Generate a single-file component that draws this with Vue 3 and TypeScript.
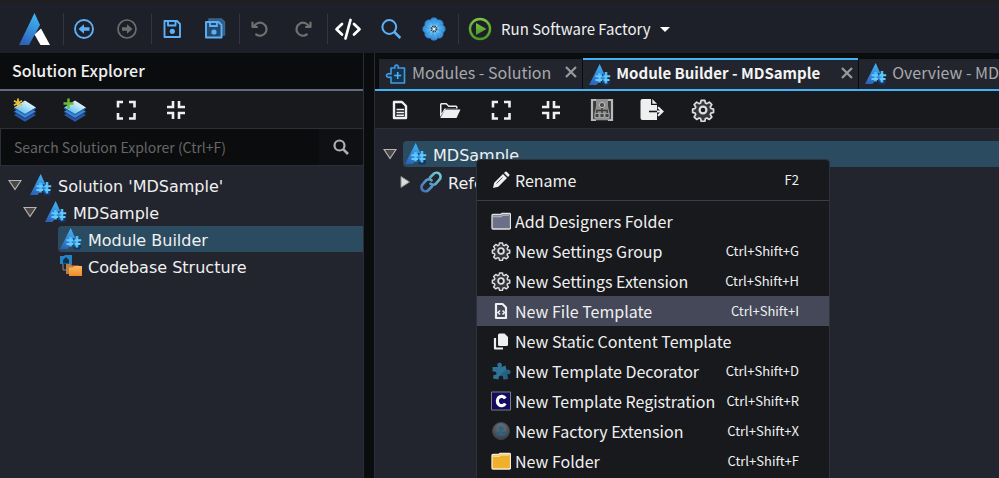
<script setup lang="ts">
interface Tool {
  icon: string
  label: string
}

interface Tab {
  icon: string
  title: string
  active?: boolean
}

interface TreeNode {
  icon: string
  title: string
  level: number
  state: 'open' | 'closed' | 'leaf'
  selected?: boolean
}

interface MenuEntry {
  icon: string
  title: string
  shortcut?: string
  highlighted?: boolean
}

const mainTools: Tool[][] = [
  [{ icon: 'back', label: 'Back' }, { icon: 'forward', label: 'Forward' }],
  [{ icon: 'save', label: 'Save' }, { icon: 'save-all', label: 'Save all' }],
  [{ icon: 'undo', label: 'Undo' }, { icon: 'redo', label: 'Redo' }],
  [
    { icon: 'code', label: 'Code' },
    { icon: 'search', label: 'Search' },
    { icon: 'flower', label: 'Modules' },
  ],
]

const explorerTools: Tool[][] = [
  [{ icon: 'layers-new', label: 'New application' }, { icon: 'layers-add', label: 'Add application' }],
  [{ icon: 'expand', label: 'Expand all' }, { icon: 'collapse', label: 'Collapse all' }],
]

const designerTools: Tool[][] = [
  [{ icon: 'document', label: 'New' }, { icon: 'folder-open', label: 'Open' }],
  [{ icon: 'expand', label: 'Expand all' }, { icon: 'collapse', label: 'Collapse all' }],
  [{ icon: 'hierarchy', label: 'Metadata' }, { icon: 'export', label: 'Export' }],
  [{ icon: 'gear', label: 'Settings' }],
]

const tabs: Tab[] = [
  { icon: 'module', title: 'Modules - Solution' },
  { icon: 'designer', title: 'Module Builder - MDSample', active: true },
  { icon: 'designer', title: 'Overview - MDSample' },
]

const solutionTree: TreeNode[] = [
  { icon: 'designer', title: "Solution 'MDSample'", level: 0, state: 'open' },
  { icon: 'designer', title: 'MDSample', level: 1, state: 'open' },
  { icon: 'designer', title: 'Module Builder', level: 2, state: 'leaf', selected: true },
  { icon: 'codebase', title: 'Codebase Structure', level: 2, state: 'leaf' },
]

const designerTree: TreeNode[] = [
  { icon: 'designer', title: 'MDSample', level: 0, state: 'open', selected: true },
  { icon: 'link', title: 'References', level: 1, state: 'closed' },
]

const menuGroups: MenuEntry[][] = [
  [{ icon: 'pencil', title: 'Rename', shortcut: 'F2' }],
  [
    { icon: 'folder-grey', title: 'Add Designers Folder' },
    { icon: 'gear', title: 'New Settings Group', shortcut: 'Ctrl+Shift+G' },
    { icon: 'gear', title: 'New Settings Extension', shortcut: 'Ctrl+Shift+H' },
    { icon: 'file-code', title: 'New File Template', shortcut: 'Ctrl+Shift+I', highlighted: true },
    { icon: 'copy', title: 'New Static Content Template' },
    { icon: 'puzzle', title: 'New Template Decorator', shortcut: 'Ctrl+Shift+D' },
    { icon: 'registration', title: 'New Template Registration', shortcut: 'Ctrl+Shift+R' },
    { icon: 'factory', title: 'New Factory Extension', shortcut: 'Ctrl+Shift+X' },
    { icon: 'folder-yellow', title: 'New Folder', shortcut: 'Ctrl+Shift+F' },
  ],
]
</script>

<template>
  <svg class="sprite" aria-hidden="true">
    <defs>
      <linearGradient id="blueFade" x1="0.6" y1="0" x2="0.3" y2="1">
        <stop offset="0" stop-color="#41b4f5" />
        <stop offset="1" stop-color="#2c62b8" />
      </linearGradient>
      <linearGradient id="iceFade" x1="1" y1="0" x2="0" y2="1">
        <stop offset="0.1" stop-color="#ffffff" />
        <stop offset="0.8" stop-color="#63c1ee" />
      </linearGradient>
      <linearGradient id="linkFade" gradientUnits="userSpaceOnUse" x1="20" y1="0" x2="0" y2="20">
        <stop offset="0.1" stop-color="#6ccbd3" />
        <stop offset="0.9" stop-color="#4a76c0" />
      </linearGradient>
      <linearGradient id="greenFade" x1="0" y1="0" x2="0" y2="1">
        <stop offset="0" stop-color="#7cc043" />
        <stop offset="1" stop-color="#4b9a24" />
      </linearGradient>
      <linearGradient id="orangeFade" x1="0" y1="0" x2="0" y2="1">
        <stop offset="0" stop-color="#ffb95c" />
        <stop offset="1" stop-color="#ee8a2a" />
      </linearGradient>
      <radialGradient id="steelFade" cx="0.5" cy="0.3" r="0.7">
        <stop offset="0" stop-color="#727883" />
        <stop offset="1" stop-color="#363b43" />
      </radialGradient>
      <radialGradient id="petalFade" gradientUnits="userSpaceOnUse" cx="12" cy="12" r="12">
        <stop offset="0.1" stop-color="#c9ecff" />
        <stop offset="0.45" stop-color="#52b2ee" />
        <stop offset="1" stop-color="#2c83d4" />
      </radialGradient>
    </defs>

    <symbol id="logo" viewBox="0 0 32 32">
      <path d="M15.5 0L21 12 10 32H0z" fill="url(#blueFade)" />
      <path d="M22 15.5l-6.500 6L21.500 32H31z" fill="#fff" />
    </symbol>

    <symbol id="back" viewBox="0 0 24 24">
      <circle cx="12" cy="12" r="9" fill="none" stroke="#5cb0f8" stroke-width="1.900" />
      <path d="M6.500 12l5.500-4.800v3h5.500v3.600H12v3z" fill="#5cb0f8" />
    </symbol>
    <symbol id="forward" viewBox="0 0 24 24">
      <circle cx="12" cy="12" r="9" fill="none" stroke="#6e6e6e" stroke-width="1.700" />
      <path d="M17.500 12L12 7.200v3H7v3.600h5v3z" fill="#6e6e6e" />
    </symbol>
    <symbol id="save" viewBox="0 0 24 24">
      <path d="M4.500 4h12.500l3 3v13h-15.500zM8 4v4.500h7.500V4" fill="none" stroke="#5cb0f8" stroke-width="1.900" stroke-linejoin="round" />
      <circle cx="12.300" cy="14.300" r="2.600" fill="#5cb0f8" />
    </symbol>
    <symbol id="save-all" viewBox="0 0 24 24">
      <path d="M6 2h12.500l3 3v13H6z" fill="#315d86" stroke="#3a668e" stroke-width="1.500" stroke-linejoin="round" />
      <path d="M3 5h12.500l3 3V20.500H3z" fill="#26486a" stroke="#5cb0f8" stroke-width="1.900" stroke-linejoin="round" />
      <path d="M7 5v4h7V5" fill="none" stroke="#5cb0f8" stroke-width="1.800" />
      <circle cx="11" cy="15" r="2.600" fill="#5cb0f8" />
    </symbol>
    <symbol id="undo" viewBox="0 0 24 24">
      <path d="M4.500 5.500v4.500h4.500M6.200 9.300a6.500 6.500 0 1 1 2 8.200" fill="none" stroke="#707070" stroke-width="2.200" stroke-linecap="round" stroke-linejoin="round" />
    </symbol>
    <symbol id="redo" viewBox="0 0 24 24">
      <path d="M19.500 5.500v4.500h-4.500M17.800 9.300a6.500 6.500 0 1 0-2 8.200" fill="none" stroke="#707070" stroke-width="2.200" stroke-linecap="round" stroke-linejoin="round" />
    </symbol>
    <symbol id="code" viewBox="0 0 28 24">
      <path d="M8 7L2.500 12.300 8 17.500M20 7l5.500 5.300L20 17.500M16.500 3L11.500 21.500" fill="none" stroke="#fff" stroke-width="2.700" stroke-linecap="round" stroke-linejoin="round" />
    </symbol>
    <symbol id="search" viewBox="0 0 24 24">
      <circle cx="10.300" cy="10" r="6.900" fill="none" stroke="#5cb0f8" stroke-width="2" />
      <path d="M15.300 15l6 6" stroke="#5cb0f8" stroke-width="2.500" />
    </symbol>
    <symbol id="flower" viewBox="0 0 24 24">
      <g fill="url(#petalFade)" stroke="#2377c4" stroke-width="0.400">
        <circle cx="12" cy="4.800" r="4.200" />
        <circle cx="17.100" cy="6.900" r="4.200" />
        <circle cx="19.200" cy="12" r="4.200" />
        <circle cx="17.100" cy="17.100" r="4.200" />
        <circle cx="12" cy="19.200" r="4.200" />
        <circle cx="6.900" cy="17.100" r="4.200" />
        <circle cx="4.800" cy="12" r="4.200" />
        <circle cx="6.900" cy="6.900" r="4.200" />
      </g>
      <circle cx="12" cy="12" r="3.600" fill="#c4e6fa" />
      <circle cx="12" cy="12" r="2.500" fill="none" stroke="#17384f" stroke-width="2" stroke-dasharray="1.300 .660" />
      <circle cx="12" cy="12" r="1.100" fill="#f2fbff" />
    </symbol>
    <symbol id="run" viewBox="0 0 24 24">
      <circle cx="12" cy="12" r="10" fill="none" stroke="url(#greenFade)" stroke-width="2.400" />
      <path d="M8 6l10.500 6L8 18z" fill="url(#greenFade)" />
    </symbol>

    <symbol id="layers" viewBox="0 0 24 24">
      <path d="M1 17l11-6 11 6-11 6.800z" fill="#2857a4" />
      <path d="M1 13.500l11-6 11 6-11 6.500z" fill="#3f86d3" />
      <path d="M1 13.500v1l11 6.500 11-6.500v-1L12 20z" fill="#1b4184" />
      <path d="M1 9.500L12 2.500l11 7-11 6.500z" fill="url(#iceFade)" />
      <path d="M1 9.500v1.300l11 6.500 11-6.500V9.500L12 16z" fill="#2466ae" />
    </symbol>
    <symbol id="layers-new" viewBox="0 0 24 24">
      <use href="#layers" width="24" height="24" />
      <path d="M5 .5v9M1 2.700l8 4.600M9 2.700L1 7.300" stroke="#e8c33a" stroke-width="1.800" />
    </symbol>
    <symbol id="layers-add" viewBox="0 0 24 24">
      <use href="#layers" width="24" height="24" />
      <path d="M5.500 .5v10M.5 5.500h10" stroke="#6dbb2f" stroke-width="2.400" />
    </symbol>
    <symbol id="expand" viewBox="0 0 24 24">
      <path d="M4 9.500V4h5M15 4h5.500v5.500M20.500 15v5.500H15M9 20.500H4V15" fill="none" stroke="#efefef" stroke-width="2.600" />
    </symbol>
    <symbol id="collapse" viewBox="0 0 24 24">
      <path d="M9 3v6H3M15 3v6h6M9 21v-6H3M15 21v-6h6" fill="none" stroke="#efefef" stroke-width="2.600" />
    </symbol>
    <symbol id="magnifier" viewBox="0 0 18 18">
      <circle cx="7.500" cy="7.500" r="5" fill="none" stroke="#b0b0b0" stroke-width="2.200" />
      <path d="M11.300 11.300L16 16" stroke="#b0b0b0" stroke-width="2.600" />
    </symbol>

    <symbol id="document" viewBox="0 0 24 24">
      <path d="M6 4h8l4 4v12H6z" fill="none" stroke="#efefef" stroke-width="2.400" stroke-linejoin="round" />
      <path d="M8.500 11.500h7.500M8.500 14.500h7.500M8.500 17.300h7.500" stroke="#efefef" stroke-width="1.400" />
    </symbol>
    <symbol id="folder-open" viewBox="0 0 24 24">
      <path d="M2 19V6.500q0-1.500 1.500-1.500h5l2.500 2.500h7q1.500 0 1.500 1.500v1.500H8z" fill="#efefef" />
      <path d="M3.500 15.500V6.500h4.500L10.500 9H18v1.500H6.500z" fill="#17191d" />
      <path d="M7 11.500h15.500L18.500 20H2.300z" fill="#efefef" />
    </symbol>
    <symbol id="hierarchy" viewBox="0 0 24 24">
      <path d="M1 1h22v22H1z" fill="#3a3a3a" />
      <path d="M6 2H2v20h4M18 2h4v20h-4" fill="none" stroke="#b8b8b8" stroke-width="2.200" />
      <path d="M6 1h12v7l1.500 7v7h-15v-7L6 8z" fill="#8f8f8f" />
      <circle cx="12" cy="7" r="2.600" fill="#4b4b4b" stroke="#c0c0c0" stroke-width="1" />
      <path d="M12 10v6M12 12.500h-5.200v3M12 12.500h5.200v3" fill="none" stroke="#3a3a3a" stroke-width="1.400" />
      <path d="M5 15.500h4v4H5zM10 15.500h4v4h-4zM15 15.500h4v4h-4z" fill="#444" stroke="#b0b0b0" stroke-width=".8" />
    </symbol>
    <symbol id="export" viewBox="0 0 24 24">
      <path d="M2.500 1H11v6h6v15H2.500Q.5 22 .5 20V3q0-2 2-2z" fill="#efefef" />
      <path d="M12.300 1L17 5.800h-4.700z" fill="#efefef" />
      <path d="M9 13.500h8" stroke="#17191d" stroke-width="1.600" />
      <path d="M17 13.500h5M18 9.300l4.500 4.200-4.500 4.200" fill="none" stroke="#efefef" stroke-width="2" />
    </symbol>
    <symbol id="gear" viewBox="0 0 24 24">
      <path d="M10 2h4l.7 3 1.600.700 2.700-1.700 2.800 2.800-1.700 2.700.7 1.600 2.900.7v3.700l-2.900.8-.7 1.600 1.700 2.700-2.800 2.700-2.700-1.600-1.600.6-.7 3h-4l-.7-3-1.600-.6L5 23.300l-2.800-2.700 1.700-2.700-.7-1.600-2.700-.8v-3.700l2.700-.7.7-1.600L2.200 6.800 5 4l2.700 1.700L9.300 5z" transform="translate(1.200 .5) scale(.9)" fill="#34373a" stroke="#dedede" stroke-width="1.900" stroke-linejoin="round" />
      <circle cx="12" cy="12" r="3.400" fill="#17191d" stroke="#dedede" stroke-width="2.200" />
    </symbol>

    <symbol id="module" viewBox="0 0 22 22">
      <path d="M6 5h4c-1.500-4 4.500-4 3 0h6.500v15H6v-6c-6 2-6-5 0-3z" fill="#17334c" stroke="#3d9ce6" stroke-width="1.600" stroke-linejoin="round" />
      <path d="M12.700 9v7M9.200 12.500h7" stroke="#4db2f5" stroke-width="1.600" />
    </symbol>
    <symbol id="designer" viewBox="0 0 22 22">
      <path d="M13 19l8-3.500V20l-1.500 1.500H14z" fill="#16345f" />
      <path d="M10.700 0L17 14l-1.500 5-4-3.500L7.500 21H0z" fill="url(#blueFade)" />
      <path d="M10.500 9v9.500M17 8v11.500" stroke="#4fc0fb" stroke-width="2.600" />
      <path d="M6.500 12.300h14.700M6.500 16h14" stroke="#62caff" stroke-width="2" />
      <path d="M13.800 10v2.400M13.800 15.500v3" stroke="#1a4f91" stroke-width="1.600" />
    </symbol>
    <symbol id="codebase" viewBox="0 0 22 22">
      <path d="M0 1h4l1-1h7v9H0z" fill="#2385c8" />
      <path d="M3 5l3-3 3 3v3.500H3z" fill="#12304a" />
      <path d="M3 9v6h4" fill="none" stroke="#8c8c8c" />
      <path d="M6 9h5l1.500 1.500H19V19H6z" fill="#b98049" />
      <path d="M9 12.500h4l1.500-1.500H22V21H9z" fill="url(#orangeFade)" />
    </symbol>
    <symbol id="link" viewBox="0 0 22 22">
      <g fill="none" stroke="url(#linkFade)" stroke-width="2.600" stroke-linecap="round">
        <path d="M10 6.500l3.500-3.500a4 4 0 0 1 6 5.500l-3.500 4a4 4 0 0 1-5.500.2" />
        <path d="M12 15.500l-3.500 3.500a4 4 0 0 1-6-5.500l3.500-4a4 4 0 0 1 5.500-.2" />
      </g>
    </symbol>
    <symbol id="twisty-open" viewBox="0 0 14 14">
      <path d="M1 2.500h12L7 11.500z" fill="#4b4744" stroke="#b5b5b5" stroke-width="1.200" />
    </symbol>
    <symbol id="twisty-closed" viewBox="0 0 14 14">
      <path d="M3 1.500v11L11.500 7z" fill="#dcdcdc" stroke="#8d8d8d" />
    </symbol>

    <symbol id="pencil" viewBox="0 0 20 20">
      <path d="M2 18l1.200-5.300L12 4l4 4-8.700 8.800zM13 3l1.300-1.200q.7-.6 1.400 0L18.200 4.300q.6.700 0 1.400L17 7z" fill="#efefef" />
      <path d="M5.500 13.500l6-6" stroke="#555" stroke-width="1" />
    </symbol>
    <symbol id="folder-grey" viewBox="0 0 20 20">
      <path d="M1 4.500q0-1 1-1h7.500l1.500-1h7.500q1 0 1 1V17q0 1-1 1H2q-1 0-1-1z" fill="#6a7187" stroke="#e2e2e2" stroke-width="1.300" />
      <path d="M2 5.800h8l1.500-1.500h6.500" fill="none" stroke="#b9bdc9" stroke-width="1.100" />
    </symbol>
    <symbol id="folder-yellow" viewBox="0 0 20 20">
      <path d="M1 4.500q0-1 1-1h5.500l1.500-1h9.500q1 0 1 1V17q0 1-1 1H2q-1 0-1-1z" fill="#efb02c" stroke="#f7ecd2" stroke-width="1.300" />
      <path d="M2 5.300h6.500L10 4h8" fill="none" stroke="#fbe7b4" stroke-width="1.100" />
    </symbol>
    <symbol id="file-code" viewBox="0 0 20 20">
      <path d="M5 3h6.500L15 6.500V17H5z" fill="none" stroke="#efefef" stroke-width="2.200" stroke-linejoin="round" />
      <path d="M9 9.500l-2 2 2 2M11.500 9.500l2 2-2 2" fill="none" stroke="#efefef" stroke-width="1.600" />
    </symbol>
    <symbol id="copy" viewBox="0 0 20 20">
      <path d="M4 7v10.500h8" fill="none" stroke="#efefef" stroke-width="2.200" stroke-linejoin="round" />
      <path d="M7 4q0-1.500 1.500-1.500h5L17 6v7.500q0 1.500-1.500 1.500h-7Q7 15 7 13.500z" fill="#efefef" />
    </symbol>
    <symbol id="puzzle" viewBox="0 0 20 20">
      <path d="M1.500 6h5.500Q5 2 8.500 1.500 12 2 10.500 6l4-1.500 1 4.500q4-1 4 2 0 3-3.500 2l1 5-4.500.5q0-4-2.500-4t-2.500 4L2 17.500l.5-3.500q3 0 3-2T1.500 10.500z" fill="#2f7396" />
      <path d="M10.500 12l5-3q4-1 4 2 0 3-3.500 2l1 5-4.500.5q0-4-2-4.500z" fill="#1f5674" opacity=".6" />
    </symbol>
    <symbol id="registration" viewBox="0 0 20 20">
      <path d="M.5 1h19v18H.5z" fill="#130b5e" stroke="#7d7d84" />
      <path d="M14.300 7.500a4.300 4.700 0 1 0 0 5" fill="none" stroke="#fff" stroke-width="3.200" />
    </symbol>
    <symbol id="factory" viewBox="0 0 20 20">
      <circle cx="10" cy="10" r="8.400" fill="url(#steelFade)" stroke="#4a505a" stroke-width=".8" />
      <circle cx="10" cy="7.500" r="2.800" fill="#2f6580" />
      <path d="M5 14.500q0-4 3-4h4q3 0 3 4z" fill="#2a5f7c" />
      <path d="M7.500 14l2.500-3 2.500 3z" fill="#515a66" />
    </symbol>
    <symbol id="close" viewBox="0 0 14 14">
      <path d="M2 2l10 10M12 2L2 12" stroke="#9a9a9a" stroke-width="2.200" />
    </symbol>
  </svg>

  <div class="app">
    <header class="main-bar">
      <a class="brand" href="#" aria-label="Home">
        <svg class="brand-mark"><use href="#logo" /></svg>
      </a>
      <div v-for="(group, g) in mainTools" :key="g" class="main-group">
        <button v-for="tool in group" :key="tool.icon" type="button" class="main-tool" :aria-label="tool.label">
          <svg :class="tool.icon === 'code' ? 'icon-wide' : 'icon-large'"><use :href="`#${tool.icon}`" /></svg>
        </button>
      </div>
      <button type="button" class="run">
        <svg class="icon-large"><use href="#run" /></svg>
        <span>Run Software Factory</span>
        <span class="caret"></span>
      </button>
    </header>

    <main class="workspace">
      <aside class="explorer">
        <h2 class="explorer-title">Solution Explorer</h2>
        <div class="tool-bar">
          <div v-for="(group, g) in explorerTools" :key="g" class="tool-group">
            <button v-for="tool in group" :key="tool.icon" type="button" class="tool" :aria-label="tool.label">
              <svg class="icon-large"><use :href="`#${tool.icon}`" /></svg>
            </button>
          </div>
        </div>
        <form class="search" @submit.prevent>
          <input type="text" aria-label="Search Solution Explorer" placeholder="Search Solution Explorer (Ctrl+F)" />
          <button type="submit" aria-label="Search">
            <svg class="icon-small"><use href="#magnifier" /></svg>
          </button>
        </form>
        <ul class="tree">
          <li v-for="node in solutionTree" :key="node.title" class="tree-row" :class="`level-${node.level}`">
            <span class="twisty">
              <svg v-if="node.state !== 'leaf'"><use :href="`#twisty-${node.state}`" /></svg>
            </span>
            <span class="node" :class="{ selected: node.selected }">
              <svg class="icon-node"><use :href="`#${node.icon}`" /></svg>
              <span class="node-title">{{ node.title }}</span>
            </span>
          </li>
        </ul>
      </aside>

      <section class="designer">
        <nav class="tabs">
          <div v-for="tab in tabs" :key="tab.title" class="tab" :class="{ active: tab.active }">
            <a href="#">
              <svg class="icon-node"><use :href="`#${tab.icon}`" /></svg>
              <span class="tab-title">{{ tab.title }}</span>
            </a>
            <button type="button" class="tab-close" aria-label="Close tab">
              <svg class="icon-close"><use href="#close" /></svg>
            </button>
          </div>
        </nav>
        <div class="tool-bar">
          <div v-for="(group, g) in designerTools" :key="g" class="tool-group">
            <button v-for="tool in group" :key="tool.icon" type="button" class="tool" :aria-label="tool.label">
              <svg class="icon-large"><use :href="`#${tool.icon}`" /></svg>
            </button>
          </div>
        </div>
        <div class="canvas">
          <ul class="tree">
            <li v-for="node in designerTree" :key="node.title" class="tree-row" :class="`level-${node.level}`">
              <span class="twisty">
                <svg v-if="node.state !== 'leaf'"><use :href="`#twisty-${node.state}`" /></svg>
              </span>
              <span class="node" :class="{ selected: node.selected }">
                <svg class="icon-node"><use :href="`#${node.icon}`" /></svg>
                <span class="node-title">{{ node.title }}</span>
              </span>
            </li>
          </ul>

          <div class="menu" role="menu">
            <div v-for="(group, g) in menuGroups" :key="g" class="menu-group">
              <button
                v-for="entry in group"
                :key="entry.title"
                type="button"
                role="menuitem"
                class="menu-item"
                :class="{ highlighted: entry.highlighted }"
              >
                <svg class="icon-menu"><use :href="`#${entry.icon}`" /></svg>
                <span class="menu-title">{{ entry.title }}</span>
                <kbd v-if="entry.shortcut">{{ entry.shortcut }}</kbd>
              </button>
            </div>
          </div>
        </div>
      </section>
    </main>
  </div>
</template>

<style>
body {
  margin: 0;
  background: #22252e;
}
</style>

<style scoped>
* {
  box-sizing: border-box;
}

.sprite {
  position: absolute;
  width: 0;
  height: 0;
}

.app {
  display: flex;
  flex-direction: column;
  height: 100vh;
  overflow: hidden;
  border-top: 3px solid #1f1f1f;
  background: #0b0c0e;
  color: #f0f0f0;
  font-family: "Noto Sans CJK SC", "Noto Sans", sans-serif;
  font-size: 16px;
  line-height: 24px;
}

button {
  display: flex;
  align-items: center;
  justify-content: center;
  padding: 0;
  border: 0;
  background: none;
  color: inherit;
  font: inherit;
}

a {
  color: inherit;
  text-decoration: none;
}

svg {
  display: block;
  flex: none;
}

.icon-large {
  width: 24px;
  height: 24px;
}

.icon-wide {
  width: 28px;
  height: 24px;
}

.icon-small {
  width: 18px;
  height: 18px;
}

.icon-node {
  width: 22px;
  height: 22px;
}

.icon-menu {
  width: 20px;
  height: 20px;
}

.icon-close {
  width: 14px;
  height: 14px;
}

.main-bar {
  display: flex;
  flex: none;
  align-items: center;
  height: 50px;
  padding-top: 2px;
  background: #1d2029;
}

.brand {
  display: flex;
  justify-content: flex-end;
  width: 64px;
  padding-right: 12px;
  border-right: 1px solid #323641;
}

.brand-mark {
  width: 32px;
  height: 32px;
}

.main-group {
  display: flex;
  gap: 4px;
  height: 30px;
  padding-right: 5px;
  border-right: 1px solid #323641;
}

.main-tool {
  width: 39px;
}

.run {
  gap: 9px;
  margin-left: 9px;
  font-size: 15px;
}

.caret {
  border: 5px solid transparent;
  border-top-color: #fff;
  border-bottom: 0;
}

.workspace {
  display: flex;
  flex: 1;
  gap: 10px;
  min-height: 0;
}

.explorer {
  display: flex;
  flex-direction: column;
  flex: 0 0 364px;
  border-right: 1px solid #2a2d37;
  background: #22252e;
}

.explorer-title {
  margin: 0;
  padding: 5px 12px 7px;
  border-bottom: 2px solid #636983;
  background: #0b0c0e;
  font-size: 16px;
  font-weight: 500;
  line-height: 24px;
}

.tool-bar {
  display: flex;
  flex: none;
  gap: 1px;
  height: 38px;
  border-bottom: 1px solid #2c2f37;
  background: #17191d;
}

.tool-group {
  display: flex;
}

.tool {
  width: 50px;
}

.search {
  display: flex;
  flex: none;
  height: 37px;
  border-bottom: 1px solid #2c2f37;
  background: #0b0c0e;
}

.search input {
  flex: 1;
  min-width: 0;
  padding: 0 13px;
  border: 0;
  border-left: 1px solid #2c2f37;
  outline: 0;
  background: none;
  color: #f0f0f0;
  font: inherit;
  font-size: 14px;
}

.search input::placeholder {
  color: #666;
  opacity: 1;
}

.search button {
  width: 44px;
  background: #0f1013;
}

.tree {
  display: grid;
  gap: 1px;
  margin: 0;
  padding: 6px 0 0 8px;
  list-style: none;
  font-family: "DejaVu Sans", sans-serif;
  font-size: 16px;
}

.tree-row {
  display: flex;
  height: 26px;
}

.level-1 {
  padding-left: 15px;
}

.level-2 {
  padding-left: 30px;
}

.twisty {
  display: flex;
  align-items: center;
  flex: 0 0 20px;
}

.twisty svg {
  width: 14px;
  height: 14px;
}

.node {
  display: flex;
  flex: 1;
  align-items: center;
  gap: 6px;
  padding-left: 2px;
  border-radius: 4px 0 0 4px;
}

.node.selected {
  background: #2b4c60;
}

.node-title {
  padding-top: 3px;
  white-space: nowrap;
}

.designer {
  display: flex;
  flex: 1;
  flex-direction: column;
  min-width: 0;
  border-left: 1px solid #2a2d37;
}

.tabs {
  display: flex;
  align-items: flex-end;
  flex: none;
  gap: 1px;
  height: 38px;
  padding-left: 4px;
  border-bottom: 2px solid #42b4f5;
  overflow: hidden;
}

.tab {
  display: flex;
  flex: none;
  align-items: center;
  gap: 13px;
  height: 30px;
  padding: 0 4px 0 6px;
  background: #22252e;
  color: #a9a9ab;
}

.tab a {
  display: flex;
  align-items: center;
  gap: 5px;
}

.tab-title,
.tab-close {
  padding-bottom: 4px;
}

.tab.active {
  gap: 20px;
  height: 31px;
  border-top: 2px solid #42b4f5;
  color: #f4f4f4;
  font-size: 15px;
  font-weight: 700;
}

.canvas {
  position: relative;
  flex: 1;
  min-height: 0;
  background: #22252e;
}

.canvas .tree {
  gap: 2px;
  padding-top: 12px;
}

/* Context menu opened over the tree */
.menu {
  position: absolute;
  top: 30px;
  left: 101px;
  width: 354px;
  border: 1px solid #2e323c;
  border-radius: 4px;
  background: #17191d;
}

.menu-group {
  padding: 5px 0;
}

.menu-group + .menu-group {
  border-top: 1px solid #3b3e46;
}

.menu-item {
  justify-content: flex-start;
  gap: 4px;
  width: 100%;
  height: 30px;
  padding: 0 30px 0 14px;
}

.menu-item.highlighted {
  background: #444859;
}

.menu-title {
  flex: 1;
  text-align: left;
  white-space: nowrap;
}

kbd {
  font-family: inherit;
  font-size: 13px;
}
</style>
